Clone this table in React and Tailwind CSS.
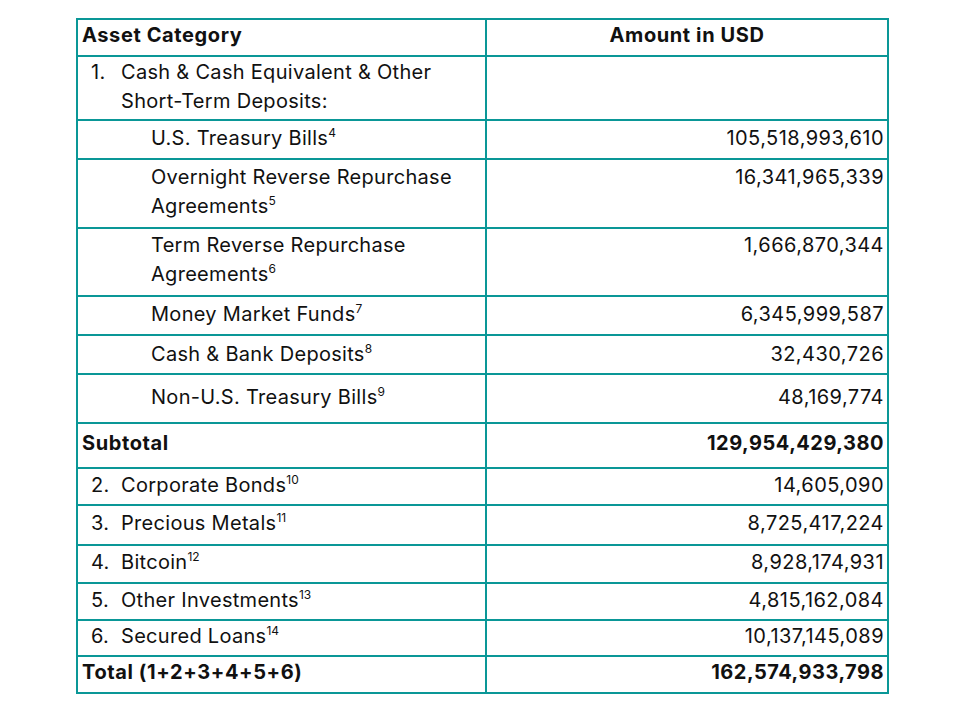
const rows = [
  { kind: "head", h: "h-[35px]", pt: "pt-[1px]" },
  { kind: "main", num: "1.", label: ["Cash & Cash Equivalent & Other", "Short-Term Deposits:"], value: "", h: "h-[62px]", pt: "pt-[1px]" },
  { kind: "sub", label: ["U.S. Treasury Bills"], sup: "4", value: "105,518,993,610", h: "h-[37px]", pt: "pt-[3px]" },
  { kind: "sub", label: ["Overnight Reverse Repurchase", "Agreements"], sup: "5", value: "16,341,965,339", h: "h-[67px]", pt: "pt-[3px]" },
  { kind: "sub", label: ["Term Reverse Repurchase", "Agreements"], sup: "6", value: "1,666,870,344", h: "h-[66px]", pt: "pt-[2px]" },
  { kind: "sub", label: ["Money Market Funds"], sup: "7", value: "6,345,999,587", h: "h-[37px]", pt: "pt-[3px]" },
  { kind: "sub", label: ["Cash & Bank Deposits"], sup: "8", value: "32,430,726", h: "h-[37px]", pt: "pt-[4px]" },
  { kind: "sub", label: ["Non-U.S. Treasury Bills"], sup: "9", value: "48,169,774", h: "h-[47px]", pt: "pt-[8px]" },
  { kind: "bold", label: ["Subtotal"], value: "129,954,429,380", h: "h-[43px]", pt: "pt-[5px]" },
  { kind: "main", num: "2.", label: ["Corporate Bonds"], sup: "10", value: "14,605,090", h: "h-[35px]", pt: "pt-[2px]" },
  { kind: "main", num: "3.", label: ["Precious Metals"], sup: "11", value: "8,725,417,224", h: "h-[38px]", pt: "pt-[3px]" },
  { kind: "main", num: "4.", label: ["Bitcoin"], sup: "12", value: "8,928,174,931", h: "h-[36px]", pt: "pt-[2px]" },
  { kind: "main", num: "5.", label: ["Other Investments"], sup: "13", value: "4,815,162,084", h: "h-[35px]", pt: "pt-[2px]" },
  { kind: "main", num: "6.", label: ["Secured Loans"], sup: "14", value: "10,137,145,089", h: "h-[34px]", pt: "pt-[1px]" },
  { kind: "bold", label: ["Total (1+2+3+4+5+6)"], value: "162,574,933,798", h: "h-[35px]", pt: "pt-[1px]" },
];

const Label = ({ lines, sup }) => (
  <div>
    {lines.map((l, i) => (
      <div key={i}>
        {l}
        {sup && i === lines.length - 1 && (
          <sup className="text-[12px] tracking-normal -top-[8px]">{sup}</sup>
        )}
      </div>
    ))}
  </div>
);

const Row = ({ row, first }) => {
  const border = first ? "" : "border-t-2 border-[#0a9797]";
  if (row.kind === "head") {
    return (
      <div className={`flex ${row.h} font-bold tracking-[0.6px]`}>
        <div className={`w-[409px] border-r-2 border-[#0a9797] pl-[4px] ${row.pt}`}>Asset Category</div>
        <div className={`flex-1 text-center ${row.pt}`}>Amount in USD</div>
      </div>
    );
  }
  const bold = row.kind === "bold";
  return (
    <div className={`flex ${border}`}>
      <div className={`w-[409px] ${row.h} border-r-2 border-[#0a9797] ${row.pt} ${bold ? "font-bold pl-[4px] tracking-[0.6px]" : ""}`}>
        {row.kind === "main" && (
          <div className="flex">
            <span className="w-[43px] pl-[13px] shrink-0">{row.num}</span>
            <Label lines={row.label} sup={row.sup} />
          </div>
        )}
        {row.kind === "sub" && (
          <div className="pl-[73px]">
            <Label lines={row.label} sup={row.sup} />
          </div>
        )}
        {bold && <Label lines={row.label} />}
      </div>
      <div className={`flex-1 text-right pr-[3px] ${row.pt} ${bold ? "font-bold tracking-[0.5px]" : "tracking-[0.45px]"}`}>
        {row.value}
      </div>
    </div>
  );
};

export default function App() {
  return (
    <div className="w-[956px] h-[712px] bg-white pt-[18px] pl-[76px] text-[#111] text-[20px] leading-[29px] tracking-[0.3px] [font-family:Inter,'Noto_Sans',sans-serif]">
      <div className="w-[813px] border-2 border-[#0a9797]">
        {rows.map((r, i) => (
          <Row key={i} row={r} first={i === 0} />
        ))}
      </div>
    </div>
  );
}
